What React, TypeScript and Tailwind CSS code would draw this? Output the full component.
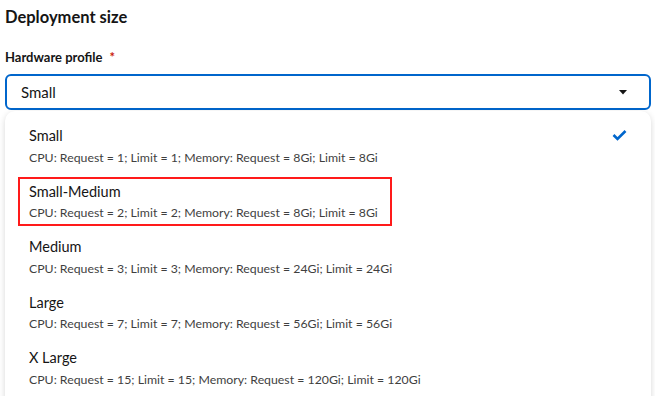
import React from 'react';

const profiles = [
  { name: 'Small', desc: 'CPU: Request = 1; Limit = 1; Memory: Request = 8Gi; Limit = 8Gi', selected: true },
  { name: 'Small-Medium', desc: 'CPU: Request = 2; Limit = 2; Memory: Request = 8Gi; Limit = 8Gi' },
  { name: 'Medium', desc: 'CPU: Request = 3; Limit = 3; Memory: Request = 24Gi; Limit = 24Gi' },
  { name: 'Large', desc: 'CPU: Request = 7; Limit = 7; Memory: Request = 56Gi; Limit = 56Gi' },
  { name: 'X Large', desc: 'CPU: Request = 15; Limit = 15; Memory: Request = 120Gi; Limit = 120Gi' },
];

const App: React.FC = () => {
  return (
    <div
      className="w-[655px] h-[396px] overflow-hidden bg-white text-[#151515]"
      style={{ fontFamily: 'Lato, "Noto Sans", sans-serif' }}
    >
      <div className="px-[5px] pt-[6px]">
        <h2 className="text-[16.5px] leading-[22px] font-bold">Deployment size</h2>

        <div className="mt-[20px] flex items-center text-[13px] leading-[18px] font-bold">
          Hardware profile
          <span className="ml-[7px] text-[#c9190b]">*</span>
        </div>

        {/* toggle */}
        <div className="mt-[8px] h-[36px] w-[646px] rounded-[6px] border-2 border-[#0066cc] flex items-center justify-between pl-[14px] pr-[22px]">
          <span className="text-[15px]">Small</span>
          <svg width="8" height="5" viewBox="0 0 8 5">
            <path d="M0 0 L8 0 L4 4.5 Z" fill="#151515" />
          </svg>
        </div>

        {/* menu */}
        <div className="relative mt-[1px] w-[646px] rounded-t-[10px] bg-white shadow-[0_2px_6px_rgba(0,0,0,0.16)] pt-[7px] pb-[6px] px-[8px]">
          {profiles.map((p) => (
            <div key={p.name} className="flex items-start justify-between px-[16px] py-[7px]">
              <div className="flex flex-col">
                <span className="text-[14.5px] leading-[21px]">{p.name}</span>
                <span className="mt-[2.5px] text-[12.3px] leading-[18px] text-[#3f3f3f]">{p.desc}</span>
              </div>
              {p.selected && (
                <svg width="15" height="12" viewBox="0 0 15 12" className="mt-[4px]">
                  <path d="M1.5 6 L5.5 10 L13.5 2" fill="none" stroke="#0066cc" strokeWidth="2.6" />
                </svg>
              )}
            </div>
          ))}

          {/* annotation box */}
          <div className="absolute left-[13px] top-[66px] w-[374px] h-[49px] border-2 border-[#ff1a1a]" />
        </div>
      </div>
    </div>
  );
};

export default App;
